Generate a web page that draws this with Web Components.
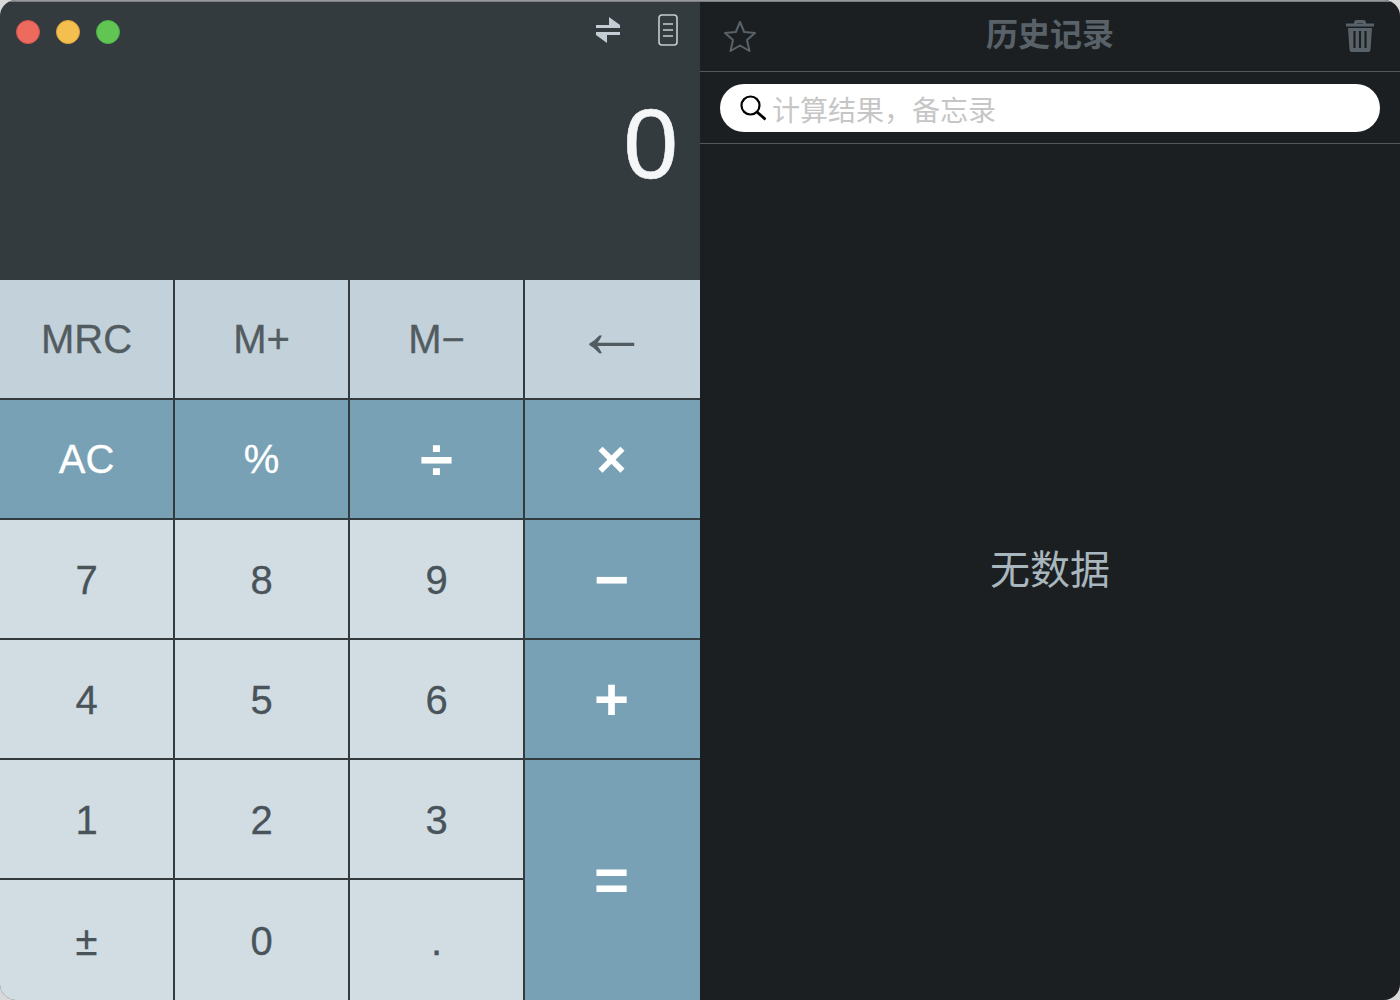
<!DOCTYPE html>
<html lang="zh">
<head>
<meta charset="utf-8">
<title>计算器</title>
<style>
    html,body{margin:0;padding:0;background:#d9d9d9;}
    body{width:1400px;height:1000px;overflow:hidden;font-family:"Liberation Sans","Noto Sans CJK SC",sans-serif;}
</style>
</head>
<body>
<calc-window>
    <calc-panel slot="left"></calc-panel>
    <history-panel slot="right"></history-panel>
</calc-window>

<script>
class CalcWindow extends HTMLElement {
    constructor() {
        super();
        this.attachShadow({mode:'open'})
        this.shadowRoot.innerHTML = `
        <style>
            :host{
                display:flex;
                width:1400px;
                height:1000px;
                box-sizing:border-box;
                border-radius:16px;
                overflow:hidden;
                position:relative;
            }
            #top{
                position:absolute;
                top:0;
                left:0;
                right:0;
                height:2px;
                background:linear-gradient(#a3a5a7,#6f7376);
                z-index:2;
            }
        </style>
        <div id="top"></div>
        <slot name="left"></slot>
        <slot name="right"></slot>
        `
    }
}

class CalcKey extends HTMLElement {
    constructor() {
        super();
        this.attachShadow({mode:'open'})
        this.shadowRoot.innerHTML = `
        <style>
            :host{
                display:flex;
                align-items:center;
                justify-content:center;
                box-sizing:border-box;
                border-right:2px solid #343b3f;
                border-bottom:2px solid #343b3f;
                font-size:40px;
                color:#49535a;
                background:#d1dce3;
                padding-top:2px;
                -webkit-text-stroke:0.3px currentColor;
            }
            :host([kind="mem"]){background:#c3d1da;color:#525c60;padding-top:0;}
            :host([kind="op"]){background:#78a1b5;color:#fff;padding-top:0;}
            :host([edge="right"]){border-right:none;padding-right:2px;}
            :host([edge="bottom"]){border-bottom:none;}
            :host([heavy]){font-weight:700;font-size:60px;-webkit-text-stroke:0;}
            :host([heavy="x"]){font-size:52px;}
        </style>
        <slot></slot>
        `
    }
}

class CalcPanel extends HTMLElement {
    constructor() {
        super();
        this.attachShadow({mode:'open'})
        this.shadowRoot.innerHTML = `
        <style>
            :host{
                display:flex;
                flex-direction:column;
                width:700px;
                height:1000px;
                background:#343b3f;
            }
            header{
                height:64px;
                display:flex;
                align-items:center;
                box-sizing:border-box;
                padding:0 22px 0 16px;
            }
            .light{
                width:24px;
                height:24px;
                border-radius:50%;
                margin-right:16px;
                box-sizing:border-box;
            }
            .red{background:#ec6a5e;border:1px solid #d8544a;}
            .yellow{background:#f4bf4f;border:1px solid #dea63c;}
            .green{background:#61c554;border:1px solid #52ac47;}
            #tools{
                margin-left:auto;
                margin-bottom:4px;
                display:flex;
                align-items:center;
                gap:37px;
            }
            #screen{
                height:216px;
                box-sizing:border-box;
                display:flex;
                justify-content:flex-end;
                align-items:flex-start;
                padding:25px 22px 0 0;
                font-size:98px;
                line-height:110px;
                color:#f5f6f7;
                -webkit-text-stroke:0.6px currentColor;
            }
            #keys{
                display:grid;
                grid-template-columns:repeat(4,175px);
                grid-auto-rows:120px;
            }
            #eq{grid-row:span 2;border-bottom:none;padding-bottom:2px;}
            #back{font-size:76px;padding-bottom:18px;-webkit-text-stroke:0;}
        </style>
        <header>
            <div class="light red"></div>
            <div class="light yellow"></div>
            <div class="light green"></div>
            <div id="tools">
                <svg width="26" height="26" viewBox="0 0 26 26">
                    <path d="M14 0L25 8V11H1V8H14ZM1 15H25V18H12V26L1 18Z" fill="#c4cdd3"/>
                </svg>
                <svg width="20" height="32" viewBox="0 0 20 32">
                    <rect x="1" y="1" width="18" height="30" rx="3" fill="none" stroke="#c4cdd3" stroke-width="1.6"/>
                    <path d="M5 10H15M5 16H15M5 22H15" stroke="#c4cdd3" stroke-width="1.6"/>
                </svg>
            </div>
        </header>
        <div id="screen">0</div>
        <div id="keys">
            <calc-key kind="mem">MRC</calc-key>
            <calc-key kind="mem">M+</calc-key>
            <calc-key kind="mem">M−</calc-key>
            <calc-key kind="mem" edge="right" id="back">←</calc-key>
            <calc-key kind="op">AC</calc-key>
            <calc-key kind="op">%</calc-key>
            <calc-key kind="op" heavy>÷</calc-key>
            <calc-key kind="op" edge="right" heavy="x">×</calc-key>
            <calc-key>7</calc-key>
            <calc-key>8</calc-key>
            <calc-key>9</calc-key>
            <calc-key kind="op" edge="right" heavy>−</calc-key>
            <calc-key>4</calc-key>
            <calc-key>5</calc-key>
            <calc-key>6</calc-key>
            <calc-key kind="op" edge="right" heavy>+</calc-key>
            <calc-key>1</calc-key>
            <calc-key>2</calc-key>
            <calc-key>3</calc-key>
            <calc-key kind="op" edge="right" id="eq" heavy>=</calc-key>
            <calc-key edge="bottom">±</calc-key>
            <calc-key edge="bottom">0</calc-key>
            <calc-key edge="bottom">.</calc-key>
        </div>
        `
    }
}

class HistoryPanel extends HTMLElement {
    constructor() {
        super();
        this.attachShadow({mode:'open'})
        this.shadowRoot.innerHTML = `
        <style>
            :host{
                display:flex;
                flex-direction:column;
                width:700px;
                height:1000px;
                background:#1b1f22;
            }
            header{
                height:72px;
                box-sizing:border-box;
                border-bottom:1px solid #55595c;
                display:grid;
                grid-template-columns:1fr auto 1fr;
                align-items:center;
                padding:0 26px;
            }
            #star{margin-left:-3px;}
            #trash{justify-self:end;}
            h1{
                margin:0 0 8px;
                font-size:32px;
                font-weight:700;
                color:#596268;
            }
            #bar{
                height:72px;
                box-sizing:border-box;
                border-bottom:1px solid #55595c;
                padding:12px 20px 11px;
            }
            #search{
                height:48px;
                background:#fff;
                border-radius:24px;
                display:flex;
                align-items:center;
                padding-left:20px;
                gap:6px;
                font-size:28px;
                color:#c6c6c6;
            }
            #search span{padding-top:2px;}
            #empty{
                flex:1;
                display:flex;
                align-items:center;
                justify-content:center;
                font-size:40px;
                color:#a9b6bd;
                padding-bottom:11px;
            }
        </style>
        <header>
            <svg id="star" width="34" height="34" viewBox="0 0 34 34">
                <path d="M17 3L21.200 13L32 14L24 21L26.500 32L17 26.500L7.500 32L10 21L2 14L12.800 13Z" fill="none" stroke="#596268" stroke-width="2" stroke-linejoin="round"/>
            </svg>
            <h1>历史记录</h1>
            <svg id="trash" width="28" height="32" viewBox="0 0 28 32">
                <path d="M0 5H28M9.500 5V3Q9.500 1.500 11 1.500H17Q18.500 1.500 18.500 3V5" fill="none" stroke="#596268" stroke-width="3"/>
                <path d="M2 8H26L24.500 30Q24.300 32 22.500 32H5.500Q3.700 32 3.500 30Z" fill="#596268"/>
                <path d="M8.500 11V28M14 11V28M19.500 11V28" stroke="#1b1f22" stroke-width="2.200"/>
            </svg>
        </header>
        <div id="bar">
            <div id="search">
                <svg width="26" height="26" viewBox="0 0 26 26">
                    <circle cx="10.500" cy="10.500" r="9" fill="none" stroke="#000" stroke-width="2.200"/>
                    <path d="M17 17L25.500 24.500" stroke="#000" stroke-width="2.800"/>
                </svg>
                <span>计算结果，备忘录</span>
            </div>
        </div>
        <div id="empty">无数据</div>
        `
    }
}

customElements.define('calc-key',CalcKey)
customElements.define('calc-panel',CalcPanel)
customElements.define('history-panel',HistoryPanel)
customElements.define('calc-window',CalcWindow)
</script>
</body>
</html>
